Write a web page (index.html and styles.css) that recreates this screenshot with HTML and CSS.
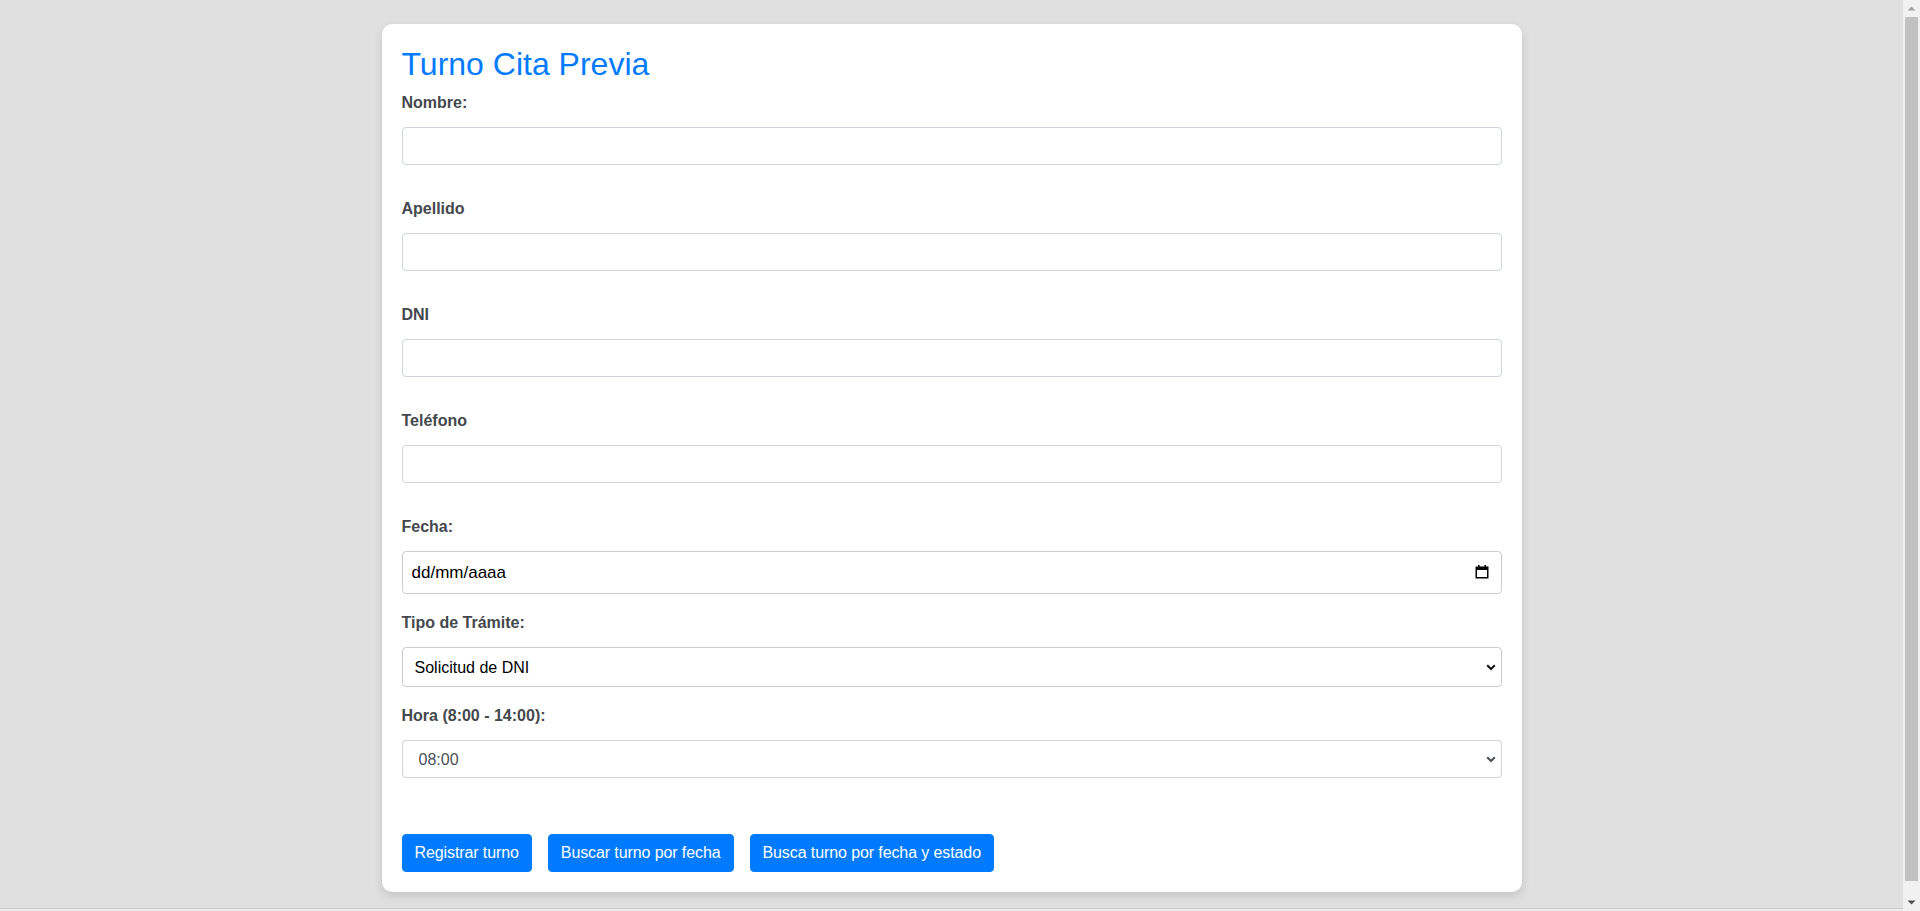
FILE: index.html
```html
<!DOCTYPE html>
<html lang="es">
<head>
<meta charset="utf-8">
<title>Turno Cita Previa</title>
<link rel="stylesheet" href="styles.css">
</head>
<body>
<div class="viewport">
  <div class="content">
    <div class="page">
      <main class="card">
        <h2 class="title">Turno Cita Previa</h2>
        <form class="form">
          <div class="field">
            <label class="label" for="nombre">Nombre:</label>
            <input class="control" id="nombre" type="text">
          </div>
          <div class="field">
            <label class="label" for="apellido">Apellido</label>
            <input class="control" id="apellido" type="text">
          </div>
          <div class="field">
            <label class="label" for="dni">DNI</label>
            <input class="control" id="dni" type="text">
          </div>
          <div class="field">
            <label class="label" for="telefono">Teléfono</label>
            <input class="control" id="telefono" type="text">
          </div>
          <div class="field field-date">
            <label class="label" for="fecha">Fecha:</label>
            <div class="date-box">
              <input class="date-text" id="fecha" type="text" placeholder="dd/mm/aaaa">
              <svg class="cal-icon" width="14" height="14" viewBox="0 0 14 14" aria-hidden="true">
                <rect x="3" y="0" width="1.6" height="3" fill="#000"/>
                <rect x="9.4" y="0" width="1.6" height="3" fill="#000"/>
                <rect x="1.25" y="2.25" width="11.5" height="10.5" fill="none" stroke="#000" stroke-width="1.5"/>
                <rect x="1" y="2" width="12" height="3" fill="#000"/>
              </svg>
            </div>
          </div>
          <div class="field field-tipo">
            <label class="label" for="tipo">Tipo de Trámite:</label>
            <div class="select-wrap">
              <select class="select select-tipo" id="tipo">
                <option>Solicitud de DNI</option>
                <option>Renovación de DNI</option>
                <option>Pasaporte</option>
              </select>
              <svg class="chevron" width="10" height="7" viewBox="0 0 10 7" aria-hidden="true">
                <polyline points="1.2,1.2 5,5 8.8,1.2" fill="none" stroke="#111" stroke-width="2"/>
              </svg>
            </div>
          </div>
          <div class="field field-hora">
            <label class="label" for="hora">Hora (8:00 - 14:00):</label>
            <div class="select-wrap">
              <select class="select select-hora" id="hora">
                <option>08:00</option>
                <option>09:00</option>
                <option>10:00</option>
                <option>11:00</option>
                <option>12:00</option>
                <option>13:00</option>
                <option>14:00</option>
              </select>
              <svg class="chevron" width="10" height="7" viewBox="0 0 10 7" aria-hidden="true">
                <polyline points="1.2,1.2 5,5 8.8,1.2" fill="none" stroke="#495057" stroke-width="2"/>
              </svg>
            </div>
          </div>
          <div class="actions">
            <button class="btn" type="button">Registrar turno</button>
            <button class="btn" type="button">Buscar turno por fecha</button>
            <button class="btn" type="button">Busca turno por fecha y estado</button>
          </div>
        </form>
      </main>
    </div>
  </div>
  <div class="scrollbar" aria-hidden="true">
    <div class="sb-button">
      <svg width="17" height="17" viewBox="0 0 17 17"><polygon points="4.5,10.5 8.5,6.5 12.5,10.5" fill="#a3a3a3"/></svg>
    </div>
    <div class="sb-track"><div class="sb-thumb"></div></div>
    <div class="sb-button">
      <svg width="17" height="17" viewBox="0 0 17 17"><polygon points="4.5,6.5 12.5,6.5 8.5,10.5" fill="#505050"/></svg>
    </div>
  </div>
</div>
</body>
</html>
```

FILE: styles.css
```css
html,
body {
  margin: 0;
  height: 100%;
  overflow: hidden;
}

body {
  font-family: "Liberation Sans", Arial, sans-serif;
  color: #212529;
  background: #ececec;
}

.viewport {
  display: flex;
  height: 100vh;
}

.content {
  flex: 1;
  min-width: 0;
  overflow: hidden;
  background: #ececec;
}

.page {
  background: #e0e0e0;
  padding: 24px 0 16px;
  border-bottom: 1px solid #c8c8c8;
}

.scrollbar {
  flex: none;
  width: 17px;
  display: flex;
  flex-direction: column;
  background: #f1f1f1;
}

.sb-button {
  flex: none;
  height: 17px;
}

.sb-button svg {
  display: block;
}

.sb-track {
  flex: 1;
  padding: 0 2px 13px;
  display: flex;
}

.sb-thumb {
  flex: 1;
  background: #c1c1c1;
}

.card {
  max-width: 1140px;
  margin: 0 auto;
  background: #ffffff;
  border-radius: 10px;
  box-shadow: 0 4px 10px rgba(0, 0, 0, 0.12);
  padding: 21px 20px 20px;
  box-sizing: border-box;
}

.title {
  margin: 0 0 8px;
  font-size: 32px;
  line-height: 38.4px;
  font-weight: 400;
  color: #007bff;
}

.form {
  display: flex;
  flex-direction: column;
}

.field {
  display: flex;
  flex-direction: column;
  margin-bottom: 32px;
}

.field-date,
.field-tipo {
  margin-bottom: 17px;
}

.field-hora {
  margin-bottom: 56px;
}

.label {
  font-size: 16px;
  line-height: 24px;
  font-weight: 700;
  color: #44484d;
  margin-bottom: 12px;
}

.control {
  display: block;
  width: 100%;
  height: 38px;
  box-sizing: border-box;
  border: 1px solid #ced4da;
  border-radius: 4px;
  padding: 6px 12px;
  font-family: inherit;
  font-size: 16px;
  color: #495057;
  background: #ffffff;
}

.date-box {
  display: flex;
  align-items: center;
  height: 43px;
  box-sizing: border-box;
  border: 1px solid #cccccc;
  border-radius: 4px;
  padding: 0 12px 0 9px;
  background: #ffffff;
}

.date-text {
  flex: 1;
  border: none;
  outline: none;
  padding: 0;
  font-family: inherit;
  font-size: 17px;
  color: #000000;
  background: transparent;
}

.date-text::placeholder {
  color: #000000;
  opacity: 1;
}

.cal-icon {
  flex: none;
  margin-bottom: 1px;
}

.select-wrap {
  position: relative;
}

.select {
  display: block;
  width: 100%;
  box-sizing: border-box;
  -webkit-appearance: none;
  appearance: none;
  border-radius: 4px;
  font-family: inherit;
  font-size: 16px;
  background: #ffffff;
}

.select-tipo {
  height: 40px;
  border: 1px solid #cccccc;
  padding: 0 30px 0 12px;
  color: #000000;
}

.select-hora {
  height: 38px;
  border: 1px solid #ced4da;
  padding: 0 30px 0 16px;
  color: #495057;
}

.chevron {
  position: absolute;
  right: 6px;
  top: 50%;
  margin-top: -3px;
  pointer-events: none;
}

.actions {
  display: flex;
  gap: 16px;
}

.btn {
  font-family: inherit;
  font-size: 16px;
  line-height: 24px;
  letter-spacing: -0.1px;
  padding: 6px 12px;
  border: 1px solid #007bff;
  border-radius: 4px;
  background: #007bff;
  color: #ffffff;
  cursor: pointer;
}
```
